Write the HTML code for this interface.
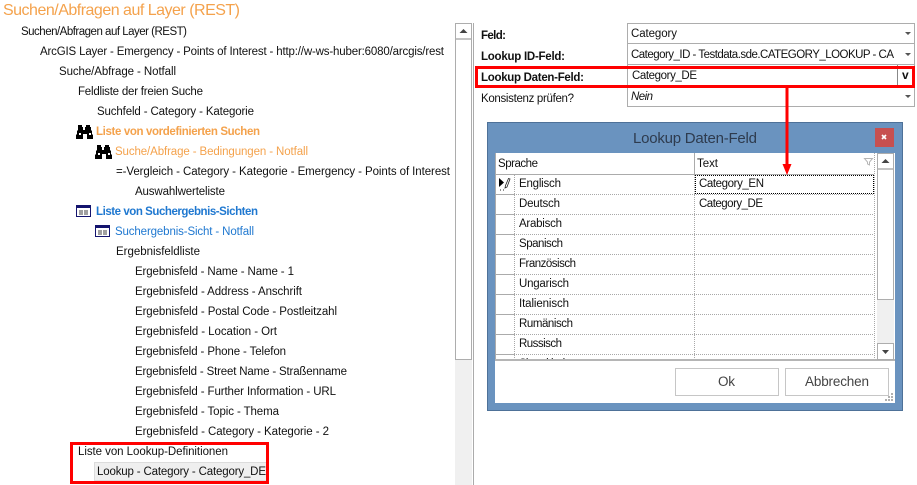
<!DOCTYPE html>
<html><head><meta charset="utf-8"><title>Suchen/Abfragen auf Layer (REST)</title>
<style>
html,body{margin:0;padding:0;background:#fff;width:917px;height:485px;overflow:hidden}
svg{display:block}
text{font-family:"Liberation Sans",sans-serif;font-size:11.5px;fill:#111;white-space:pre}
.b{font-weight:bold}
.o{fill:#f4a24c}
.bl{fill:#1f78d0}
.g{fill:none;stroke:#adadad}
.d{stroke:#a8a8a8;stroke-dasharray:1 1;fill:none}
.l{stroke:#ababab;fill:none}
</style></head><body>
<svg width="917" height="485" viewBox="0 0 917 485" xmlns="http://www.w3.org/2000/svg">
<defs>
<clipPath id="gc"><rect x="495" y="153" width="400" height="207"/></clipPath>
<g id="bino"><path fill="#000" d="M2 0h4v2h1v3h2V2h1V0h4v2h1v3l1 1v3l1 1v4H11V9H7v5H0v-4l1-1V6l1-1z"/><path fill="#fff" d="M3 8h2v2H3zM13 8h2v2h-2z"/></g>
<g id="tbl"><rect x=".5" y=".5" width="14" height="11" fill="#fff" stroke="#14146e"/><rect x="0" y="0" width="15" height="3" fill="#14146e"/><rect x="3" y="5" width="4" height="5" fill="#a0a0a0"/><rect x="8" y="5" width="4" height="5" fill="#a0a0a0"/></g>
</defs>

<text x="3" y="15" class="o" style="font-size:16px" textLength="237">Suchen/Abfragen auf Layer (REST)</text>

<text x="21" y="35" textLength="166">Suchen/Abfragen auf Layer (REST)</text>
<text x="40" y="55" textLength="404">ArcGIS Layer - Emergency - Points of Interest - http://w-ws-huber:6080/arcgis/rest</text>
<text x="59" y="75" textLength="117">Suche/Abfrage - Notfall</text>
<text x="78" y="95" textLength="125">Feldliste der freien Suche</text>
<text x="97" y="115" textLength="157">Suchfeld - Category - Kategorie</text>
<use href="#bino" x="76" y="125"/>
<text x="96" y="135" class="b o" textLength="164">Liste von vordefinierten Suchen</text>
<use href="#bino" x="95" y="145"/>
<text x="115" y="155" class="o" textLength="193">Suche/Abfrage - Bedingungen - Notfall</text>
<text x="116" y="175" textLength="334">=-Vergleich - Category - Kategorie - Emergency - Points of Interest</text>
<text x="135" y="195" textLength="90">Auswahlwerteliste</text>
<use href="#tbl" x="76" y="205"/>
<text x="96" y="215" class="b bl" textLength="162">Liste von Suchergebnis-Sichten</text>
<use href="#tbl" x="95" y="225"/>
<text x="115" y="235" class="bl" textLength="139">Suchergebnis-Sicht - Notfall</text>
<text x="116" y="255" textLength="84">Ergebnisfeldliste</text>
<text x="135" y="275" textLength="159">Ergebnisfeld - Name - Name - 1</text>
<text x="135" y="295" textLength="167">Ergebnisfeld - Address - Anschrift</text>
<text x="135" y="315" textLength="202">Ergebnisfeld - Postal Code - Postleitzahl</text>
<text x="135" y="335" textLength="142">Ergebnisfeld - Location - Ort</text>
<text x="135" y="355" textLength="151">Ergebnisfeld - Phone - Telefon</text>
<text x="135" y="375" textLength="212">Ergebnisfeld - Street Name - Straßenname</text>
<text x="135" y="395" textLength="201">Ergebnisfeld - Further Information - URL</text>
<text x="135" y="415" textLength="144">Ergebnisfeld - Topic - Thema</text>
<text x="135" y="435" textLength="194">Ergebnisfeld - Category - Kategorie - 2</text>
<text x="78" y="455" textLength="150">Liste von Lookup-Definitionen</text>
<rect x="94.5" y="462.5" width="172" height="18" fill="#efefef" stroke="#dcdcdc"/>
<text x="97" y="475" textLength="169">Lookup - Category - Category_DE</text>
<rect x="71.5" y="443.5" width="196" height="39" fill="none" stroke="#f00" stroke-width="3"/>

<!-- left scrollbar -->
<rect x="455" y="23" width="17" height="462" fill="#f0f0f0"/>
<rect x="455.5" y="23.5" width="16" height="336" fill="#fff" stroke="#adadad"/>
<rect x="456" y="38" width="15" height="2" fill="#c4c4c4"/>
<path d="M463.500 29l4 4h-8z" fill="#444"/>
<rect x="473" y="23" width="1" height="462" fill="#ababab"/>

<!-- property grid -->
<text x="481" y="39" class="b" textLength="25">Feld:</text>
<text x="481" y="60" class="b" textLength="84">Lookup ID-Feld:</text>
<text x="481" y="81" class="b" textLength="103">Lookup Daten-Feld:</text>
<text x="481" y="102" textLength="93">Konsistenz prüfen?</text>
<rect x="627.5" y="23.5" width="287" height="20" fill="#fff" stroke="#adadad"/>
<rect x="627.5" y="43.5" width="287" height="21" fill="#fff" stroke="#adadad"/>
<rect x="627.5" y="64.5" width="287" height="21" fill="#fff" stroke="#adadad"/>
<rect x="627.5" y="85.5" width="287" height="21" fill="#fff" stroke="#adadad"/>
<text x="631" y="37" textLength="46">Category</text>
<text x="631" y="58" textLength="263">Category_ID - Testdata.sde.CATEGORY_LOOKUP - CA</text>
<text x="632" y="79" textLength="65">Category_DE</text>
<text x="631" y="100" style="font-style:italic" textLength="22">Nein</text>
<path d="M905 32h6l-3 3zM905 53h6l-3 3zM905 95h6l-3 3z" fill="#555"/>
<rect x="897" y="65" width="1" height="21" fill="#888"/>
<text x="902" y="79" class="b" style="font-size:12px">v</text>
<rect x="476.5" y="67.5" width="437" height="19" fill="none" stroke="#f00" stroke-width="3"/>

<!-- dialog -->
<rect x="487.5" y="122.5" width="415" height="288" fill="#6a93bf" stroke="#4e7198"/>
<text x="633" y="143" style="font-size:15px;fill:#2e3b4e" textLength="124">Lookup Daten-Feld</text>
<rect x="875" y="128" width="19" height="19" fill="#c75050"/>
<path d="M882 135l4 4m0-4l-4 4" stroke="#fff" stroke-width="1.6" fill="none"/>
<rect x="495" y="153" width="400" height="250" fill="#fff"/>

<!-- grid -->
<g clip-path="url(#gc)">
<path class="l" d="M495.5 153v207M694.5 153v22M495 174.5h379"/>
<path class="l" d="M495 194.500h19M495 214.500h19M495 234.500h19M495 254.500h19M495 274.500h19M495 294.500h19M495 314.500h19M495 334.500h19M495 354.500h19"/>
<path class="d" d="M514.500 175v185M694.500 175v185M874.500 153v207"/>
<path class="d" d="M514 194.500h360M514 214.500h360M514 234.500h360M514 254.500h360M514 274.500h360M514 294.500h360M514 314.500h360M514 334.500h360M514 354.500h360"/>
<text x="498" y="167" textLength="40">Sprache</text>
<text x="697" y="167" textLength="21">Text</text>
<path d="M864.500 158.500h8l-3 3.500v3l-2 -1v-2z" fill="none" stroke="#b5b5b5"/>
<path d="M499 178v9l5-4.500z" fill="#000"/>
<path d="M510 179l-3 8-2 1 .5-2.500 3-7z" fill="#fff" stroke="#222" stroke-width=".8"/>
<path d="M500 190h1M503 190h1" stroke="#222"/>
<text x="519" y="187" textLength="42">Englisch</text>
<text x="519" y="207" textLength="41">Deutsch</text>
<text x="519" y="227" textLength="43">Arabisch</text>
<text x="519" y="247" textLength="44">Spanisch</text>
<text x="519" y="267" textLength="57">Französisch</text>
<text x="519" y="287" textLength="50">Ungarisch</text>
<text x="519" y="307" textLength="50">Italienisch</text>
<text x="519" y="327" textLength="54">Rumänisch</text>
<text x="519" y="347" textLength="43">Russisch</text>
<text x="519" y="367" textLength="50">Slowakisch</text>
<path d="M695 175.500h179M695 193.500h179M695.500 175v19M873.500 175v19" fill="none" stroke="#000" stroke-dasharray="1 1"/>
<text x="699" y="187" textLength="65">Category_EN</text>
<text x="699" y="207" textLength="64">Category_DE</text>
</g>
<rect x="495" y="359" width="400" height="2" fill="#b5b5b5"/>
<!-- dialog scrollbar -->
<rect x="877" y="153" width="17" height="207" fill="#f0f0f0"/>
<rect x="877.500" y="153.500" width="16" height="146" fill="#fff" stroke="#adadad"/>
<rect x="878" y="168" width="15" height="2" fill="#c4c4c4"/>
<path d="M885.500 159l4 4h-8z" fill="#444"/>
<rect x="877.500" y="343.500" width="16" height="16" fill="#fff" stroke="#adadad"/>
<path d="M882 350h7l-3.500 4z" fill="#444"/>
<!-- buttons -->
<rect x="675.500" y="368.500" width="103" height="27" fill="#fff" stroke="#c6c6c6"/>
<rect x="785.500" y="368.500" width="103" height="27" fill="#fff" stroke="#c6c6c6"/>
<text x="718" y="386" style="font-size:13.5px;fill:#444" textLength="17">Ok</text>
<text x="805" y="386" style="font-size:13.5px;fill:#444" textLength="64">Abbrechen</text>
<path d="M891 393h2v2h-2zM888 396h2v2h-2zM891 396h2v2h-2zM885 399h2v2h-2zM888 399h2v2h-2zM891 399h2v2h-2z" fill="#b0b0b0"/>

<!-- red arrow -->
<rect x="785.500" y="87" width="3" height="79" fill="#f00"/>
<path d="M782.500 164h9l-4.500 11z" fill="#f00"/>
</svg>
</body></html>
